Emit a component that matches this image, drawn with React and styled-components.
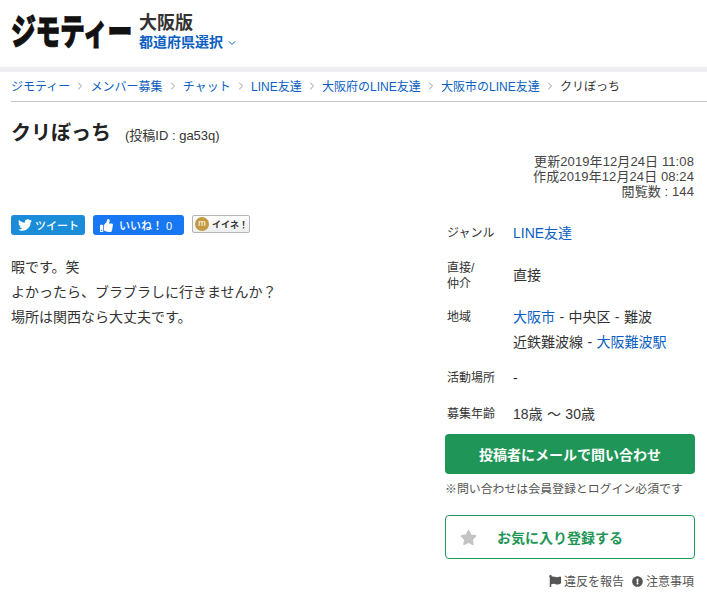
import React from "react";
import styled, { createGlobalStyle } from "styled-components";
import { FaTwitter, FaThumbsUp, FaStar, FaFlag, FaExclamationCircle } from "react-icons/fa";
import { FiChevronRight, FiChevronDown } from "react-icons/fi";

const Global = createGlobalStyle`
  html, body { margin: 0; padding: 0; background: #fff; }
  body { font-family: "Liberation Sans", "Noto Sans CJK JP", sans-serif; color: #333; width: 707px; height: 597px; overflow: hidden; }
  a { color: #0b5fc2; text-decoration: none; }
`;
const Page = styled.div`width: 707px; height: 597px; overflow: hidden;`;
const Header = styled.header`
  height: 67px; display: flex; align-items: flex-start; padding: 0 0 0 11px; box-sizing: border-box;
`;
const LogoBox = styled.div`width: 121px; height: 36px; margin-top: 11px; flex: none;`;
const Logo = styled.div`
  font-family: "Noto Sans CJK JP", sans-serif; font-weight: 900; font-size: 36px; line-height: 36px; color: #111;
  white-space: nowrap; letter-spacing: -0.5px; -webkit-text-stroke: 1px #111;
  transform: scaleX(0.69); transform-origin: left center;
`;
const Region = styled.div`margin: 12px 0 0 7px; display: flex; flex-direction: column;`;
const City = styled.div`font-size: 18px; font-weight: 700; line-height: 22px; color: #333;`;
const Pick = styled.a`font-size: 14px; font-weight: 700; line-height: 17px; display: flex; align-items: center; gap: 3px; color: #0b5fc2;`;
const Band = styled.div`height: 5px; background: #eeeef2;`;
const Crumbs = styled.nav`
  margin-left: 11px; height: 29px; box-sizing: content-box; border-bottom: 1px solid #c4c4c4; display: flex; align-items: center; font-size: 12px; gap: 2px;
  a, span { position: relative; top: -1px; }
  svg { color: #999; margin: 0 2.15px; position: relative; top: -1px; }
`;
const Current = styled.span`color: #333;`;
const Title = styled.div`display: flex; align-items: baseline; padding: 19px 0 0 11px; height: 25px;`;
const TitleText = styled.h1`margin: 0; font-size: 20px; font-weight: 700; line-height: 25px; color: #222;`;
const PostId = styled.span`font-size: 13px; margin-left: 14px; color: #333;`;
const Dates = styled.div`margin: 8px 13px 0 0; text-align: right; font-size: 13px; letter-spacing: 0.1px; line-height: 15px; color: #444;`;
const Columns = styled.div`display: flex; padding: 16px 12px 0 11px; justify-content: space-between;`;
const Left = styled.div`width: 420px;`;
const Social = styled.div`display: flex; gap: 8px; align-items: flex-start;`;
const SocialButton = styled.div`
  height: 20px; border-radius: 3px; background: ${p => p.$bg}; color: #fff; font-size: 11px; font-weight: 500; white-space: nowrap;
  display: flex; align-items: center; padding-left: 7px; gap: ${p => p.$gap}px; box-sizing: border-box; width: ${p => p.$w}px;
`;
const Mixi = styled.div`
  height: 18px; width: 58px; box-sizing: border-box; border: 1px solid #b5b5b5; border-radius: 2px;
  background: linear-gradient(#fff, #eee); display: flex; align-items: center; gap: 3px; padding-left: 2px; font-size: 9px; color: #333; font-weight: 700; white-space: nowrap;
`;
const MixiMark = styled.span`width: 14px; height: 14px; border-radius: 50%; background: #c39a42; color: #fff; font-size: 9px; line-height: 13px; text-align: center; font-weight: 400;`;
const Body = styled.div`margin-top: 20px; font-size: 14px; line-height: 25px; color: #333;`;
const Right = styled.div`width: 250px; margin-top: -2px;`;
const Info = styled.div`display: flex; flex-direction: column;`;
const Row = styled.div`display: flex; height: ${p => p.$h}px; padding-left: 2px;`;
const Label = styled.div`flex: 0 0 66px; font-size: 12px; line-height: 16px; color: #333; padding-top: ${p => p.$pt || 0}px;`;
const Value = styled.div`font-size: 14px; line-height: 25px; color: #333; padding-top: ${p => p.$pt || 0}px; word-spacing: 0.5px;`;
const Cta = styled.div`
  height: 40px; background: #1f9657; border-radius: 4px; color: #fff; font-weight: 700; font-size: 14px;
  display: flex; align-items: center; justify-content: center;
`;
const Note = styled.div`font-size: 11.9px; color: #555; margin-top: 8px; line-height: 15px; white-space: nowrap;`;
const Fav = styled.div`
  margin-top: 18px; height: 44px; border: 1px solid #1f9657; border-radius: 4px; box-sizing: border-box; display: flex; align-items: center;
  padding-left: 14px; color: #1f9657; font-weight: 700; font-size: 14px;
  svg { color: #c4c4c4; margin-right: 20px; }
`;
const Links = styled.div`
  margin-top: 15px; padding-right: 1px; display: flex; justify-content: flex-end; gap: 8px; font-size: 12px; color: #555; line-height: 16px;
  svg { margin-right: 3px; vertical-align: -1px; color: #555; }
`;

const Sep = () => <FiChevronRight size={12} />;

export default function App() {
  return (
    <Page>
      <Global />
      <Header>
        <LogoBox><Logo>ジモティー</Logo></LogoBox>
        <Region>
          <City>大阪版</City>
          <Pick href="#">都道府県選択 <FiChevronDown size={12} /></Pick>
        </Region>
      </Header>
      <Band />
      <Crumbs>
        <a href="#">ジモティー</a><Sep />
        <a href="#">メンバー募集</a><Sep />
        <a href="#">チャット</a><Sep />
        <a href="#">LINE友達</a><Sep />
        <a href="#">大阪府のLINE友達</a><Sep />
        <a href="#">大阪市のLINE友達</a><Sep />
        <Current>クリぼっち</Current>
      </Crumbs>
      <Title>
        <TitleText>クリぼっち</TitleText>
        <PostId>(投稿ID : ga53q)</PostId>
      </Title>
      <Dates>
        <div>更新2019年12月24日 11:08</div>
        <div>作成2019年12月24日 08:24</div>
        <div>閲覧数 : 144</div>
      </Dates>
      <Columns>
        <Left>
          <Social>
            <SocialButton $bg="#1b8cd8" $w={74} $gap={3}><FaTwitter size={14} />ツイート</SocialButton>
            <SocialButton $bg="#1877f2" $w={91} $gap={6}><FaThumbsUp size={13} />いいね！ 0</SocialButton>
            <Mixi><MixiMark>m</MixiMark>イイネ！</Mixi>
          </Social>
          <Body>
            <div>暇です。笑</div>
            <div>よかったら、ブラブラしに行きませんか？</div>
            <div>場所は関西なら大丈夫です。</div>
          </Body>
        </Left>
        <Right>
          <Info>
            <Row $h={43}><Label $pt={12}>ジャンル</Label><Value $pt={8}><a href="#">LINE友達</a></Value></Row>
            <Row $h={47}><Label $pt={4}>直接/<br />仲介</Label><Value $pt={7}>直接</Value></Row>
            <Row $h={63}><Label $pt={6}>地域</Label><Value $pt={2}><div><a href="#">大阪市</a> - 中央区 - 難波</div><div>近鉄難波線 - <a href="#">大阪難波駅</a></div></Value></Row>
            <Row $h={36}><Label $pt={4}>活動場所</Label><Value>-</Value></Row>
            <Row $h={32}><Label $pt={4}>募集年齢</Label><Value>18歳 〜 30歳</Value></Row>
          </Info>
          <Cta>投稿者にメールで問い合わせ</Cta>
          <Note>※問い合わせは会員登録とログイン必須です</Note>
          <Fav><FaStar size={17} />お気に入り登録する</Fav>
          <Links><span><FaFlag size={12} />違反を報告</span><span><FaExclamationCircle size={11} />注意事項</span></Links>
        </Right>
      </Columns>
    </Page>
  );
}
